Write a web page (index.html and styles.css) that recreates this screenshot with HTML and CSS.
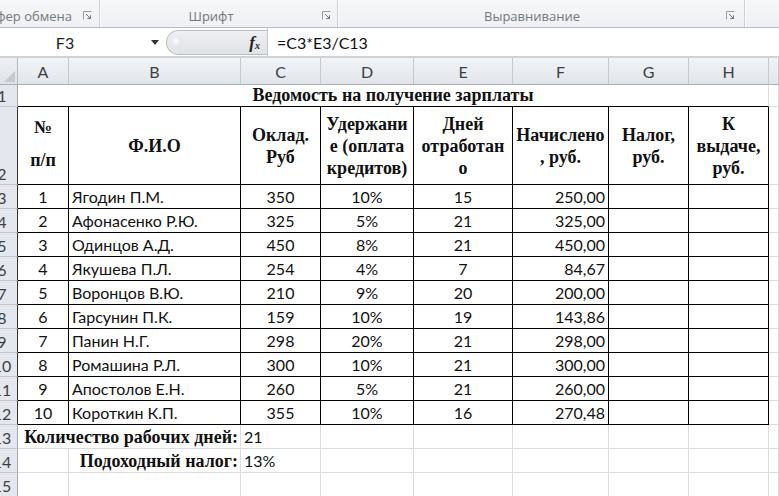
FILE: index.html
```html
<!DOCTYPE html>
<html lang="ru">
<head>
<meta charset="utf-8">
<title>Ведомость</title>
<link rel="stylesheet" href="styles.css">
</head>
<body>
<div class="app">
  <div class="ribbon">
    <div class="grp g1"><span class="lbl">Буфер обмена</span><svg class="launch" width="9" height="9" viewBox="0 0 9 9"><path d="M0.5 8.5V0.5H8.5" stroke="#9a9ea4" fill="none"/><path d="M3 3L7.5 7.5M7.5 4.3V7.5H4.3" stroke="#70747a" fill="none"/></svg></div>
    <div class="grp g2"><span class="lbl">Шрифт</span><svg class="launch" width="9" height="9" viewBox="0 0 9 9"><path d="M0.5 8.5V0.5H8.5" stroke="#9a9ea4" fill="none"/><path d="M3 3L7.5 7.5M7.5 4.3V7.5H4.3" stroke="#70747a" fill="none"/></svg></div>
    <div class="grp g3"><span class="lbl">Выравнивание</span><svg class="launch" width="9" height="9" viewBox="0 0 9 9"><path d="M0.5 8.5V0.5H8.5" stroke="#9a9ea4" fill="none"/><path d="M3 3L7.5 7.5M7.5 4.3V7.5H4.3" stroke="#70747a" fill="none"/></svg></div>
    <div class="grp g4"></div>
  </div>

  <div class="fbar">
    <div class="namebox"><span class="ref">F3</span><span class="drop"></span></div>
    <div class="fxpanel"><span class="knob"></span><span class="fx"><i>f</i><sub>x</sub></span></div>
    <div class="formula">=C3*E3/C13</div>
  </div>

  <div class="sheet">
    <div class="corner"><span class="tri"></span></div>
    <div class="ch">A</div><div class="ch">B</div><div class="ch">C</div><div class="ch">D</div><div class="ch">E</div><div class="ch">F</div><div class="ch">G</div><div class="ch">H</div><div class="ch last"></div>

    <div class="rh"><span>1</span></div>
    <div class="c title">Ведомость на получение зарплаты</div>
    <div class="c"></div>

    <div class="rh tb"><span>2</span></div>
    <div class="c b hd first"><span class="num">№</span><span>п/п</span></div>
    <div class="c b hd">Ф.И.О</div>
    <div class="c b hd">Оклад.<br>Руб</div>
    <div class="c b hd">Удержани<br>е (оплата<br>кредитов)</div>
    <div class="c b hd">Дней<br>отработан<br>о</div>
    <div class="c b hd">Начислено<br>, руб.</div>
    <div class="c b hd">Налог,<br>руб.</div>
    <div class="c b hd">К<br>выдаче,<br>руб.</div>
    <div class="c"></div>

    <div class="rh tb"><span>3</span></div>
    <div class="c b ctr first">1</div><div class="c b lft">Ягодин П.М.</div><div class="c b ctr">350</div><div class="c b ctr">10%</div><div class="c b ctr">15</div><div class="c b rgt">250,00</div><div class="c b"></div><div class="c b"></div><div class="c"></div>

    <div class="rh tb"><span>4</span></div>
    <div class="c b ctr first">2</div><div class="c b lft">Афонасенко Р.Ю.</div><div class="c b ctr">325</div><div class="c b ctr">5%</div><div class="c b ctr">21</div><div class="c b rgt">325,00</div><div class="c b"></div><div class="c b"></div><div class="c"></div>

    <div class="rh tb"><span>5</span></div>
    <div class="c b ctr first">3</div><div class="c b lft">Одинцов А.Д.</div><div class="c b ctr">450</div><div class="c b ctr">8%</div><div class="c b ctr">21</div><div class="c b rgt">450,00</div><div class="c b"></div><div class="c b"></div><div class="c"></div>

    <div class="rh tb"><span>6</span></div>
    <div class="c b ctr first">4</div><div class="c b lft">Якушева П.Л.</div><div class="c b ctr">254</div><div class="c b ctr">4%</div><div class="c b ctr">7</div><div class="c b rgt">84,67</div><div class="c b"></div><div class="c b"></div><div class="c"></div>

    <div class="rh tb"><span>7</span></div>
    <div class="c b ctr first">5</div><div class="c b lft">Воронцов В.Ю.</div><div class="c b ctr">210</div><div class="c b ctr">9%</div><div class="c b ctr">20</div><div class="c b rgt">200,00</div><div class="c b"></div><div class="c b"></div><div class="c"></div>

    <div class="rh tb"><span>8</span></div>
    <div class="c b ctr first">6</div><div class="c b lft">Гарсунин П.К.</div><div class="c b ctr">159</div><div class="c b ctr">10%</div><div class="c b ctr">19</div><div class="c b rgt">143,86</div><div class="c b"></div><div class="c b"></div><div class="c"></div>

    <div class="rh tb"><span>9</span></div>
    <div class="c b ctr first">7</div><div class="c b lft">Панин Н.Г.</div><div class="c b ctr">298</div><div class="c b ctr">20%</div><div class="c b ctr">21</div><div class="c b rgt">298,00</div><div class="c b"></div><div class="c b"></div><div class="c"></div>

    <div class="rh tb"><span>10</span></div>
    <div class="c b ctr first">8</div><div class="c b lft">Ромашина Р.Л.</div><div class="c b ctr">300</div><div class="c b ctr">10%</div><div class="c b ctr">21</div><div class="c b rgt">300,00</div><div class="c b"></div><div class="c b"></div><div class="c"></div>

    <div class="rh tb"><span>11</span></div>
    <div class="c b ctr first">9</div><div class="c b lft">Апостолов Е.Н.</div><div class="c b ctr">260</div><div class="c b ctr">5%</div><div class="c b ctr">21</div><div class="c b rgt">260,00</div><div class="c b"></div><div class="c b"></div><div class="c"></div>

    <div class="rh tb"><span>12</span></div>
    <div class="c b ctr first">10</div><div class="c b lft">Короткин К.П.</div><div class="c b ctr">355</div><div class="c b ctr">10%</div><div class="c b ctr">16</div><div class="c b rgt">270,48</div><div class="c b"></div><div class="c b"></div><div class="c"></div>

    <div class="rh"><span>13</span></div>
    <div class="c span2 lbl-bold">Количество рабочих дней:</div><div class="c lft">21</div><div class="c"></div><div class="c"></div><div class="c"></div><div class="c"></div><div class="c"></div><div class="c"></div>

    <div class="rh"><span>14</span></div>
    <div class="c"></div><div class="c lbl-bold">Подоходный налог:</div><div class="c lft">13%</div><div class="c"></div><div class="c"></div><div class="c"></div><div class="c"></div><div class="c"></div><div class="c"></div>

    <div class="rh"><span>15</span></div>
    <div class="c"></div><div class="c"></div><div class="c"></div><div class="c"></div><div class="c"></div><div class="c"></div><div class="c"></div><div class="c"></div><div class="c"></div>
  </div>
</div>
</body>
</html>
```

FILE: styles.css
```css
* { box-sizing: border-box; }
html, body { margin: 0; padding: 0; background: #fff; }
body { width: 779px; height: 496px; overflow: hidden; font-family: Lato, "Open Sans", sans-serif; }
.app { width: 779px; height: 496px; overflow: hidden; }

/* ribbon */
.ribbon {
  height: 28px;
  display: flex;
  background: linear-gradient(#f6f7f9, #eef0f3);
  border-bottom: 1px solid #b7bcc4;
  overflow: hidden;
}
.grp {
  display: flex;
  align-items: center;
  border-right: 1px solid #cdd1d7;
  box-shadow: 1px 0 0 #fafbfc;
  padding-top: 4px;
}
.grp .lbl {
  font-family: "Open Sans", "Noto Sans", sans-serif;
  font-size: 13px;
  color: #74777c;
  white-space: nowrap;
}
.launch { flex: none; }
.g1 { width: 100px; flex: none; justify-content: flex-end; padding-right: 7px; gap: 11px; }
.g2 { width: 238px; flex: none; padding-right: 6px; }
.g2 .lbl, .g3 .lbl { flex: 1; text-align: center; }
.g3 { width: 407px; flex: none; padding-right: 9px; }
.g4 { flex: 1; border-right: none; }

/* formula bar */
.fbar {
  height: 30px;
  display: flex;
  background: #fff;
  border-bottom: 2px solid #cdd1d8;
}
.namebox {
  width: 166px;
  flex: none;
  display: flex;
  align-items: center;
  font-size: 16px;
  color: #222;
}
.namebox .ref { width: 130px; text-align: center; }
.drop {
  margin-left: 21px;
  width: 0; height: 0;
  border-left: 4px solid transparent;
  border-right: 4px solid transparent;
  border-top: 5px solid #333;
}
.fxpanel {
  width: 101px;
  flex: none;
  margin: 2px 0 1px;
  display: flex;
  align-items: center;
  justify-content: flex-end;
  padding-right: 7px;
  position: relative;
  background: linear-gradient(#eef0f3, #dfe2e7);
  border: 1px solid #b8bdc4;
  border-right: none;
  border-radius: 13px 0 0 13px;
}
.knob {
  position: absolute;
  left: 5px; top: 6px;
  width: 10px; height: 10px;
  border-radius: 50%;
  background: radial-gradient(circle at 40% 40%, #fff, #d4d7dc);
}
.fx {
  font-family: "Liberation Serif", serif;
  font-size: 17px;
  color: #222;
  font-weight: bold;
}
.fx sub { font-size: 10px; font-style: italic; vertical-align: -1px; }
.formula {
  flex: 1;
  border-left: 1px solid #c3c7cd;
  display: flex;
  align-items: center;
  padding-left: 9px;
  font-size: 16px;
  color: #111;
}

/* sheet */
.sheet {
  display: grid;
  grid-template-columns: 18px 51px 172px 80px 93px 99px 96px 80px 80px 10px;
  grid-template-rows: 27px 22px 78px repeat(13, 24px);
  font-size: 16px;
  color: #111;
}
.corner {
  background: linear-gradient(#eef0f3, #dfe3e8);
  border-right: 1px solid #b4b9c0;
  border-bottom: 1px solid #a9afb7;
  position: relative;
}
.tri {
  position: absolute;
  right: 2px; bottom: 2px;
  width: 0; height: 0;
  border-left: 11px solid transparent;
  border-bottom: 11px solid #c6c9ce;
}
.ch {
  background: linear-gradient(#f2f4f6, #e1e5ea);
  border-right: 1px solid #c5cad1;
  border-bottom: 1px solid #a9afb7;
  display: flex;
  align-items: center;
  justify-content: center;
  color: #3c3f44;
  font-size: 16px;
}
.rh {
  background: #e4e8ee;
  border-right: 1px solid #a3a9b1;
  border-bottom: 1px solid #c5cad1;
  overflow: hidden;
  display: flex;
  align-items: flex-end;
  color: #3c3f44;
}
.rh span {
  flex: none;
  width: 22px;
  margin-left: -9px;
  text-align: center;
  line-height: 20px;
}
.rh.tb { border-right-color: #333; }

.c {
  border-right: 1px solid #dadcdf;
  border-bottom: 1px solid #dadcdf;
  display: flex;
  align-items: flex-end;
  padding-bottom: 2px;
  white-space: nowrap;
  line-height: 18px;
}
.title {
  grid-column: 2 / span 8;
  justify-content: center;
  border-bottom: 1px solid #000;
  border-right: 1px solid #dadcdf;
  font-family: "Liberation Serif", "DejaVu Serif", serif;
  font-weight: bold;
  font-size: 18px;
}
.b { border-right-color: #000; border-bottom-color: #000; }
.hd {
  align-items: center;
  justify-content: center;
  flex-direction: column;
  text-align: center;
  font-family: "Liberation Serif", "DejaVu Serif", serif;
  font-weight: bold;
  font-size: 18px;
  line-height: 22px;
  padding-bottom: 0;
}
.hd.first { padding-bottom: 4px; }
.hd .num { margin-bottom: 11px; }
.ctr { justify-content: center; }
.lft { justify-content: flex-start; padding-left: 3px; }
.rgt { justify-content: flex-end; padding-right: 3px; }
.span2 { grid-column: 2 / span 2; }
.lbl-bold {
  justify-content: flex-end;
  padding-right: 2px;
  font-family: "Liberation Serif", "DejaVu Serif", serif;
  font-weight: bold;
  font-size: 18px;
}
```
